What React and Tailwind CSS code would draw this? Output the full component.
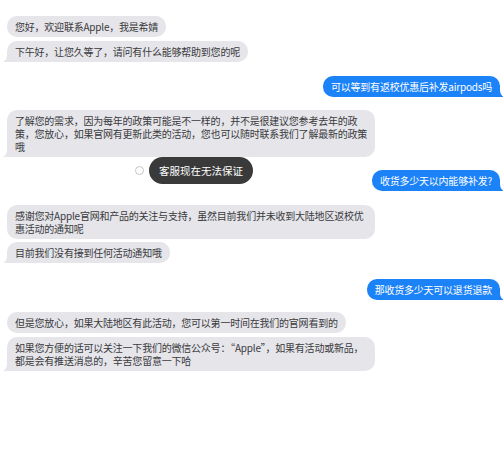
import React from "react";

const font = { fontFamily: '"Noto Sans CJK SC", "Noto Sans", sans-serif' };

function TailLeft() {
  return (
    <svg className="absolute bottom-0 left-[-4px]" width="16" height="12" viewBox="0 0 16 12">
      <path d="M4 0 H16 V12 H7 C4.5 12 2 12.6 0 12 C2.6 10.6 4 8.4 4 5 Z" fill="#e5e5ea" />
    </svg>
  );
}

function TailRight() {
  return (
    <svg className="absolute bottom-0 right-[-4px] -scale-x-100" width="16" height="12" viewBox="0 0 16 12">
      <path d="M4 0 H16 V12 H7 C4.5 12 2 12.6 0 12 C2.6 10.6 4 8.4 4 5 Z" fill="#1b82f7" />
    </svg>
  );
}

function Gray({ children, tail, className = "" }) {
  return (
    <div className={"flex justify-start pl-[7px] " + className}>
      <div className="relative">
        {tail && <TailLeft />}
        <div className="relative rounded-[10px] bg-[#e5e5ea] px-[8px] py-[4px] text-[10px] leading-[13px] tracking-[-0.22px] text-[#3a3a3c] whitespace-nowrap">
          {children}
        </div>
      </div>
    </div>
  );
}

function Blue({ children, className = "" }) {
  return (
    <div className={"flex justify-end pr-[3px] " + className}>
      <div className="relative">
        <TailRight />
        <div className="relative rounded-[10px] bg-[#1b82f7] px-[8px] py-[4px] text-[10px] leading-[13px] tracking-[-0.22px] text-white whitespace-nowrap">
          {children}
        </div>
      </div>
    </div>
  );
}

export default function App() {
  return (
    <div className="relative w-[503px] h-[453px] bg-white overflow-hidden flex flex-col pt-[16px]" style={font}>
      <Gray>您好，欢迎联系Apple，我是希婧</Gray>
      <Gray tail className="mt-[4px]">下午好，让您久等了，请问有什么能够帮助到您的呢</Gray>
      <Blue className="mt-[14px]">可以等到有返校优惠后补发airpods吗</Blue>
      <Gray tail className="mt-[13px]">
        <div className="w-[352px]">
          了解您的需求，因为每年的政策可能是不一样的，并不是很建议您参考去年的政
          <br />
          策，您放心，如果官网有更新此类的活动，您也可以随时联系我们了解最新的政策
          <br />
          哦
        </div>
      </Gray>
      <Blue className="mt-[13px]">收货多少天以内能够补发?</Blue>
      <Gray className="mt-[14px]">
        <div className="w-[352px]">
          感谢您对Apple官网和产品的关注与支持，虽然目前我们并未收到大陆地区返校优
          <br />
          惠活动的通知呢
        </div>
      </Gray>
      <Gray tail className="mt-[3px]">目前我们没有接到任何活动通知哦</Gray>
      <Blue className="mt-[16px]">那收货多少天可以退货退款</Blue>
      <Gray className="mt-[12px]">但是您放心，如果大陆地区有此活动，您可以第一时间在我们的官网看到的</Gray>
      <Gray tail className="mt-[4px]">
        <div className="w-[352px]">
          如果您方便的话可以关注一下我们的微信公众号：“Apple”，如果有活动或新品，
          <br />
          都是会有推送消息的，辛苦您留意一下哈
        </div>
      </Gray>

      <div className="absolute left-[135px] top-[166px] w-[9px] h-[9px] rounded-full border-[1.5px] border-[#c4c4c6] bg-white" />
      <div className="absolute left-[149px] top-[157px] h-[27px] px-[10px] rounded-full bg-[#3a3a3a] text-white text-[10.5px] flex items-center">
        客服现在无法保证
      </div>
    </div>
  );
}
